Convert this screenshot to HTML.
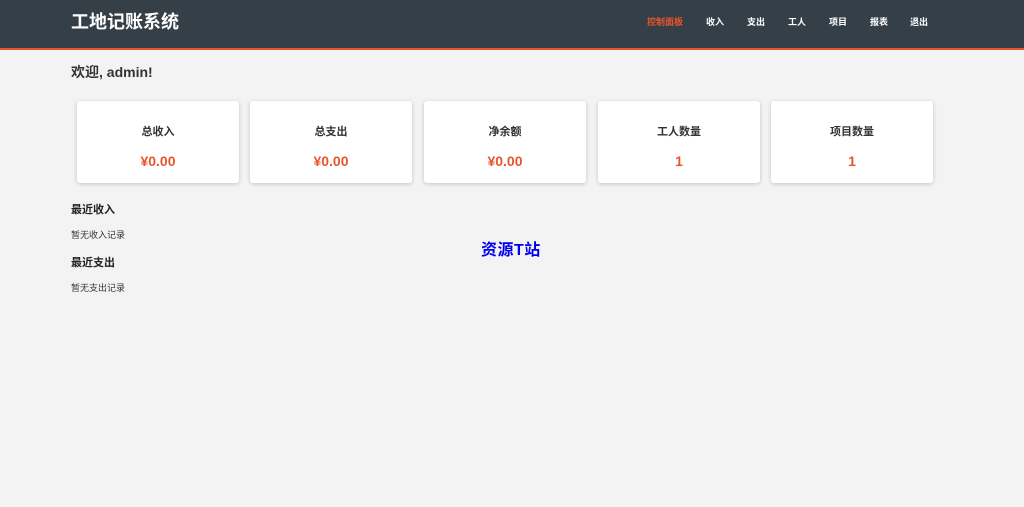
<!DOCTYPE html>
<html><head><meta charset="utf-8"><style>
body{margin:0;background:#f3f3f3;font-family:"Liberation Sans","Noto Sans CJK SC",sans-serif;width:1024px;height:507px;overflow:hidden;color:#333}
.hd{height:48px;background:#343f48;border-bottom:2px solid #e8552d;position:relative}
.logo{position:absolute;left:71px;top:10px;color:#fff;font-size:18px;font-weight:bold;line-height:24px}
.nav a{position:absolute;top:15px;font-size:9px;color:#fff;font-weight:bold;line-height:14px;text-decoration:none}
h2{position:absolute;left:71px;top:63px;margin:0;font-size:14px;line-height:18px;color:#333}
.card{position:absolute;top:101px;width:162px;height:82px;background:#fff;border-radius:3px;box-shadow:0 1px 4px rgba(0,0,0,.2);text-align:center}
.card .t{position:absolute;top:22px;width:100%;font-size:11px;font-weight:bold;color:#333}
.card .v{position:absolute;top:52px;width:100%;font-size:14px;font-weight:bold;color:#e8552d}
.s{position:absolute;left:71px;font-size:11px;font-weight:bold;color:#222}
.n{position:absolute;left:71px;font-size:9px;color:#333}
</style></head><body>
<div class="hd"><div class="logo">工地记账系统</div>
<div class="nav"><a style="left:647px;color:#e8552d">控制面板</a><a style="left:706px">收入</a><a style="left:747px">支出</a><a style="left:788px">工人</a><a style="left:829px">项目</a><a style="left:870px">报表</a><a style="left:910px">退出</a></div></div>
<h2>欢迎, admin!</h2>
<div class="card" style="left:77px"><div class="t">总收入</div><div class="v">¥0.00</div></div>
<div class="card" style="left:250px"><div class="t">总支出</div><div class="v">¥0.00</div></div>
<div class="card" style="left:424px"><div class="t">净余额</div><div class="v">¥0.00</div></div>
<div class="card" style="left:598px"><div class="t">工人数量</div><div class="v">1</div></div>
<div class="card" style="left:771px"><div class="t">项目数量</div><div class="v">1</div></div>
<div class="s" style="top:201px">最近收入</div>
<div class="n" style="top:228px">暂无收入记录</div>
<div class="s" style="top:254px">最近支出</div>
<div class="n" style="top:281px">暂无支出记录</div>
<div style="position:absolute;left:481px;top:236px;font-size:16px;font-weight:bold;color:#0000ee;letter-spacing:0.5px">资源T站</div>
</body></html>
